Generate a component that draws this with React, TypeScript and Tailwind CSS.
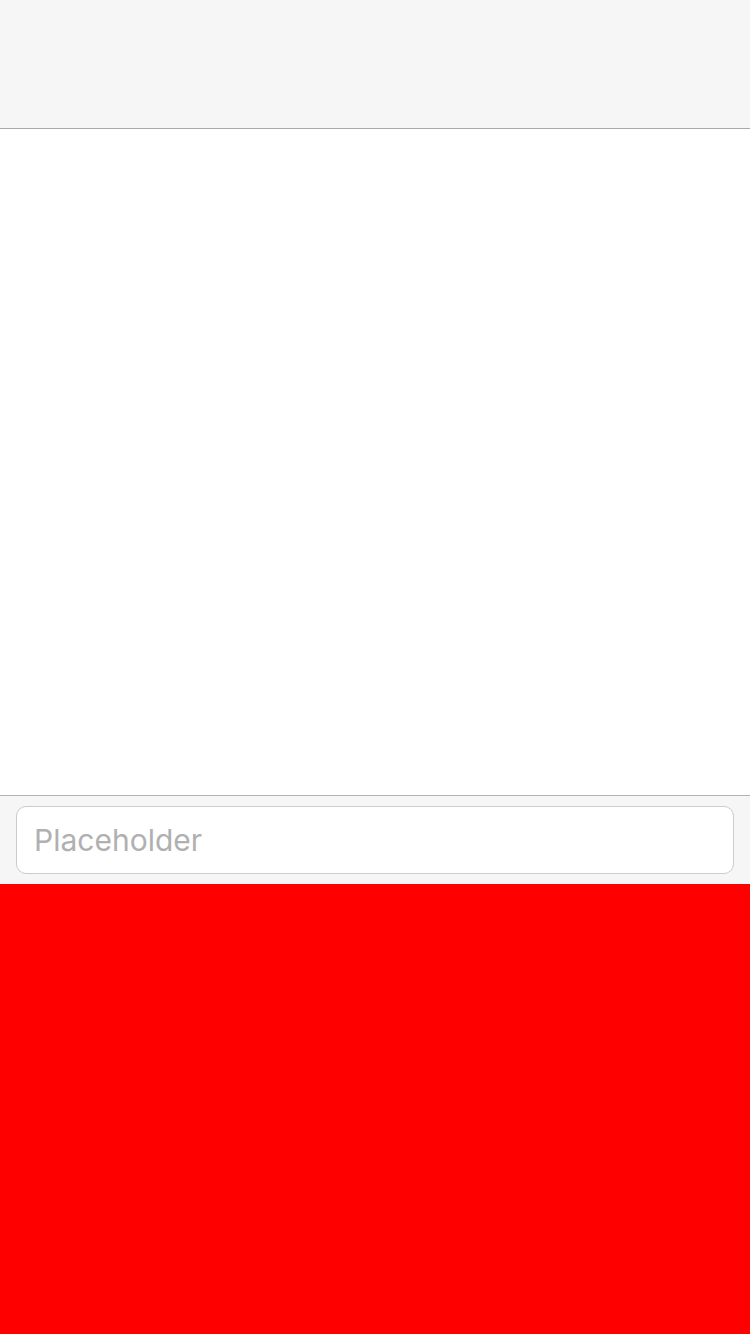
export default function App() {
  return (
    <div className="flex h-[1334px] w-[750px] flex-col bg-white" style={{ fontFamily: 'Inter, "Liberation Sans", sans-serif' }}>
      <header className="h-[129px] shrink-0 border-b border-[#a9a9a9] bg-[#f6f6f6]" />
      <main className="flex-1 bg-white" />
      <div className="shrink-0 border-t border-[#b2b2b2] bg-[#f6f6f6] px-4 pt-[10px] pb-[10px]">
        <input
          placeholder="Placeholder"
          className="h-[68px] w-full rounded-[10px] border border-[#cccccc] bg-white px-[17px] text-[30px] text-black outline-none placeholder:text-[#b0b0b0]"
        />
      </div>
      <div className="h-[450px] shrink-0 bg-[#ff0000]" />
    </div>
  );
}
